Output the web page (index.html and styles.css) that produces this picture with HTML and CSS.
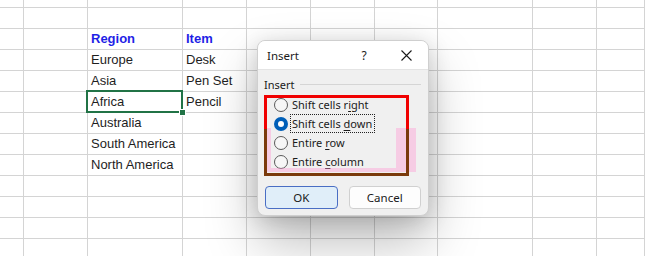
FILE: index.html
```html
<!DOCTYPE html>
<html lang="en">
<head>
    <meta charset="UTF-8">
    <meta name="viewport" content="width=device-width, initial-scale=1.0">
    <title>Insert cells</title>
    <link rel="stylesheet" href="styles.css">
</head>
<body>
    <div class="sheet" id="sheet"></div>

    <div class="dialog">
        <div class="titlebar">
            <span class="title">Insert</span>
            <span class="help">?</span>
            <span class="close">
                <svg width="11" height="11" viewBox="0 0 11 11"><path d="M0.5 0.5 L10.5 10.5 M10.5 0.5 L0.5 10.5" stroke="#1a1a1a" stroke-width="1.1" fill="none"/></svg>
            </span>
        </div>
        <div class="dlg-body">
            <div class="group-label"><span>Insert</span><span class="group-line"></span></div>
            <label class="option"><span class="radio"></span><span>Shift cells r<u>i</u>ght</span></label>
            <label class="option"><span class="radio checked"></span><span class="focus">Shift cells <u>d</u>own</span></label>
            <label class="option"><span class="radio"></span><span>Entire <u>r</u>ow</span></label>
            <label class="option"><span class="radio"></span><span>Entire <u>c</u>olumn</span></label>
            <div class="buttons">
                <button class="btn primary">OK</button>
                <button class="btn">Cancel</button>
            </div>
        </div>
    </div>

    <div class="mark-pink"></div>
    <div class="mark-box"></div>

    <script>
        // column widths and row heights of the visible part of the sheet
        const cols = [24, 64, 95, 64, 64, 64, 63, 95, 64, 48];
        const rows = [8, 21, 21, 21, 21, 21, 21, 21, 21, 21, 21, 21, 21];
        const data = {
            '2,2': ['Region', 'head'], '2,3': ['Item', 'head'],
            '3,2': ['Europe'], '3,3': ['Desk'],
            '4,2': ['Asia'], '4,3': ['Pen Set'],
            '5,2': ['Africa', 'sel'], '5,3': ['Pencil'],
            '6,2': ['Australia'],
            '7,2': ['South America'],
            '8,2': ['North America']
        };

        const sheet = document.getElementById('sheet');
        sheet.style.gridTemplateColumns = cols.map(w => w + 'px').join(' ');
        sheet.style.gridTemplateRows = rows.map(h => h + 'px').join(' ');

        rows.forEach((h, r) => {
            cols.forEach((w, c) => {
                const cell = document.createElement('div');
                cell.className = 'cell';
                const entry = data[r + ',' + c];
                if (entry) {
                    cell.textContent = entry[0];
                    if (entry[1]) cell.classList.add(entry[1]);
                }
                sheet.appendChild(cell);
            });
        });
    </script>
</body>
</html>
```

FILE: styles.css
```css
html, body {
    margin: 0;
    padding: 0;
}
body {
    width: 645px;
    height: 256px;
    overflow: hidden;
    position: relative;
    background-color: #fff;
    font-family: 'Liberation Sans', Arial, sans-serif;
}
.sheet {
    display: grid;
}
.cell {
    box-sizing: border-box;
    border-right: 1px solid #d4d4d4;
    border-bottom: 1px solid #d4d4d4;
    font-size: 13px;
    line-height: 20px;
    padding-left: 3px;
    color: #1e1e1e;
    white-space: nowrap;
    position: relative;
}
.cell.head {
    color: #1f1fe6;
    font-weight: bold;
}
.cell.sel::after {
    content: '';
    position: absolute;
    left: -2px;
    top: -2px;
    right: -1px;
    bottom: -1px;
    border: 2px solid #217346;
}
.cell.sel::before {
    content: '';
    position: absolute;
    right: -4px;
    bottom: -4px;
    width: 5px;
    height: 5px;
    background-color: #217346;
    border: 1px solid #fff;
    z-index: 1;
}

/* dialog */
.dialog {
    position: absolute;
    left: 257px;
    top: 40px;
    width: 172px;
    height: 176px;
    box-sizing: border-box;
    border-radius: 8px;
    overflow: hidden;
    background-color: #f0f0f0;
    border: 1px solid #cfcfcf;
    box-shadow: 0 26px 52px rgba(0, 0, 0, 0.26), 0 4px 22px rgba(0, 0, 0, 0.16);
    font-family: 'Noto Sans', 'Open Sans', sans-serif;
    font-size: 11px;
    color: #1a1a1a;
}
.titlebar {
    height: 28px;
    background-color: #fff;
    border-bottom: 1px solid #e4e4e4;
    display: flex;
    align-items: center;
    padding-left: 9px;
}
.title {
    font-size: 11.5px;
    flex: 1;
}
.help {
    font-size: 12px;
    width: 12px;
    text-align: center;
    margin-right: 31px;
}
.close {
    display: flex;
    margin-right: 16px;
}
.dlg-body {
    padding: 6px 7px 0 6px;
}
.group-label {
    display: flex;
    align-items: center;
    height: 16px;
    margin-bottom: 3px;
}
.group-line {
    flex: 1;
    height: 1px;
    margin-left: 5px;
    background-color: #d5d5d5;
}
.option {
    display: flex;
    align-items: center;
    height: 19px;
    padding-left: 10px;
}
.option u {
    text-decoration-thickness: 1px;
    text-underline-offset: 2px;
}
.radio {
    box-sizing: border-box;
    width: 14px;
    height: 14px;
    border-radius: 50%;
    border: 1px solid #5a5a5a;
    background-color: #f6f6f6;
    margin-right: 4px;
    position: relative;
}
.radio.checked {
    border: none;
    background-color: #005fb8;
}
.radio.checked::after {
    content: '';
    position: absolute;
    left: 4px;
    top: 4px;
    width: 6px;
    height: 6px;
    border-radius: 50%;
    background-color: #fff;
}
.focus {
    outline: 1px dotted #222;
    outline-offset: 1px;
    padding-right: 1px;
}
.buttons {
    display: flex;
    gap: 11px;
    margin-top: 15px;
    padding-left: 1px;
}
.btn {
    width: 74px;
    height: 23px;
    box-sizing: border-box;
    border: 1px solid #d0d0d0;
    border-radius: 4px;
    background-color: #fdfdfd;
    font-family: 'Noto Sans', 'Open Sans', sans-serif;
    font-size: 11.5px;
    color: #1a1a1a;
    padding: 0;
}
.btn.primary {
    background-color: #e0eef9;
    border-color: #4a6ec4;
}

/* annotation drawn over the screenshot */
.mark-box {
    position: absolute;
    left: 264px;
    top: 95px;
    width: 145px;
    height: 81px;
    box-sizing: border-box;
    border: 3px solid;
    border-image: linear-gradient(to bottom, #f00000 0 41%, #7a3a0c 41% 100%) 1;
}
.mark-pink {
    position: absolute;
    left: 266px;
    top: 128px;
    width: 150px;
    height: 44px;
    box-sizing: border-box;
    border: solid rgba(255, 150, 210, 0.4);
    border-width: 0 20px 4px 5px;
}
```
